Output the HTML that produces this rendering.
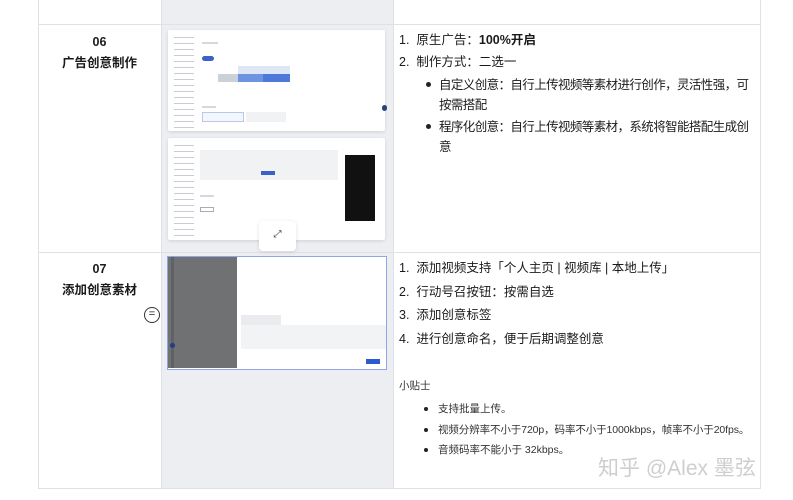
<!DOCTYPE html>
<html><head><meta charset="utf-8"><style>
*{margin:0;padding:0;box-sizing:border-box}
body{width:793px;height:500px;background:#fff;position:relative;overflow:hidden;font-family:"Liberation Sans","Noto Sans CJK SC",sans-serif;color:#1a1a1a}
.a{position:absolute}
.vl{position:absolute;width:1px;background:#dfe1e5}
.hl{position:absolute;height:1px;background:#dfe1e5}
.t{font-size:12.5px;line-height:20px;white-space:nowrap}
.sm{font-size:10.5px;line-height:18px;color:#333;white-space:nowrap}
.dot{position:absolute;width:5px;height:5px;border-radius:50%;background:#222}
.shot{position:absolute;background:#fff;border-radius:2px;box-shadow:0 1px 3px rgba(0,0,0,.12)}
.g{position:absolute;background:#d5d8de;height:2px}
</style></head><body>
<div class="a" style="left:161px;top:0;width:232px;height:488px;background:#eceef2"></div>
<div class="vl" style="left:38px;top:0;height:488px"></div>
<div class="vl" style="left:161px;top:0;height:488px"></div>
<div class="vl" style="left:393px;top:0;height:488px"></div>
<div class="vl" style="left:760px;top:0;height:488px"></div>
<div class="hl" style="left:38px;top:24px;width:723px"></div>
<div class="hl" style="left:38px;top:252px;width:723px"></div>
<div class="hl" style="left:38px;top:488px;width:723px"></div>

<div class="a" style="left:38px;width:123px;top:32px;text-align:center;font-weight:bold;font-size:12.5px;line-height:21px">06<br>广告创意制作</div>
<div class="a" style="left:38px;width:123px;top:259px;text-align:center;font-weight:bold;font-size:12.5px;line-height:21px">07<br>添加创意素材</div>
<div class="a" style="left:144px;top:307px;width:16px;height:16px;border:1.3px solid #333;border-radius:50%;font-size:11px;line-height:13px;text-align:center">=</div>

<div class="shot" style="left:168px;top:30px;width:217px;height:101px">
 <div class="a" style="left:6px;top:4px;width:20px;height:94px;background:repeating-linear-gradient(#fff 0,#fff 3px,#c9ccd2 3px,#c9ccd2 4px,#fff 4px,#fff 6px)"></div>
 <div class="g" style="left:34px;top:12px;width:16px"></div>
 <div class="a" style="left:34px;top:26px;width:12px;height:5px;border-radius:3px;background:#3a62c9"></div>
 <div class="a" style="left:70px;top:36px;width:52px;height:8px;background:#dfe6f6"></div>
 <div class="a" style="left:70px;top:44px;width:25px;height:8px;background:#6e93e0"></div>
 <div class="a" style="left:95px;top:44px;width:27px;height:8px;background:#4f79d9"></div>
 <div class="a" style="left:50px;top:44px;width:20px;height:8px;background:#ccd0d8"></div>
 <div class="g" style="left:34px;top:76px;width:14px"></div>
 <div class="a" style="left:34px;top:82px;width:42px;height:10px;border:1px solid #b9c7ea;background:#f2f6fd"></div>
 <div class="a" style="left:78px;top:82px;width:40px;height:10px;background:#f1f2f4"></div>
 <div class="a" style="left:214px;top:75px;width:5px;height:6px;background:#27437e;border-radius:3px"></div>
</div>
<div class="shot" style="left:168px;top:138px;width:217px;height:102px">
 <div class="a" style="left:6px;top:4px;width:20px;height:94px;background:repeating-linear-gradient(#fff 0,#fff 3px,#c9ccd2 3px,#c9ccd2 4px,#fff 4px,#fff 6px)"></div>
 <div class="a" style="left:32px;top:12px;width:138px;height:30px;background:#f1f2f4"></div>
 <div class="a" style="left:93px;top:33px;width:14px;height:4px;background:#3a62c9"></div>
 <div class="g" style="left:32px;top:57px;width:14px"></div>
 <div class="a" style="left:32px;top:69px;width:14px;height:5px;border:1px solid #aab"></div>
 <div class="a" style="left:177px;top:17px;width:30px;height:66px;background:#111"></div>
</div>
<div class="a" style="left:259px;top:221px;width:37px;height:30px;background:#fff;border-radius:4px;box-shadow:0 1px 4px rgba(0,0,0,.12);font-size:10px;text-align:center;line-height:28px;color:#333">⤢</div>
<div class="a" style="left:167px;top:256px;width:220px;height:114px;border:1.5px solid #8fa5e6;background:#fff">
 <div class="a" style="left:0;top:0;width:69px;height:111px;background:#6f7173"></div>
 <div class="a" style="left:3px;top:0;width:3px;height:111px;background:#5f6165"></div>
 <div class="a" style="left:2px;top:86px;width:5px;height:5px;border-radius:50%;background:#233e86"></div>
 <div class="g" style="left:73px;top:58px;width:40px;background:#e9ebee;height:10px"></div>
 <div class="a" style="left:73px;top:68px;width:145px;height:24px;background:#f2f3f5"></div>
 <div class="a" style="left:198px;top:102px;width:14px;height:5px;background:#2d5ad1"></div>
</div>

<div class="a t" style="left:399px;top:30px">1.&nbsp;&nbsp;原生广告：<b>100%开启</b></div>
<div class="a t" style="left:399px;top:52px">2.&nbsp;&nbsp;制作方式：二选一</div>
<div class="dot" style="left:426px;top:82px"></div>
<div class="a t" style="left:439px;top:75px;letter-spacing:-0.6px">自定义创意：自行上传视频等素材进行创作，灵活性强，可<br>按需搭配</div>
<div class="dot" style="left:426px;top:124px"></div>
<div class="a t" style="left:439px;top:117px;letter-spacing:-0.6px">程序化创意：自行上传视频等素材，系统将智能搭配生成创<br>意</div>

<div class="a t" style="left:399px;top:258px">1.&nbsp;&nbsp;添加视频支持「个人主页 | 视频库 | 本地上传」</div>
<div class="a t" style="left:399px;top:282px">2.&nbsp;&nbsp;行动号召按钮：按需自选</div>
<div class="a t" style="left:399px;top:305px">3.&nbsp;&nbsp;添加创意标签</div>
<div class="a t" style="left:399px;top:329px">4.&nbsp;&nbsp;进行创意命名，便于后期调整创意</div>

<div class="a sm" style="left:399px;top:377px">小贴士</div>
<div class="dot" style="left:424px;top:407px;width:4px;height:4px"></div>
<div class="a sm" style="left:438px;top:400px">支持批量上传。</div>
<div class="dot" style="left:424px;top:428px;width:4px;height:4px"></div>
<div class="a sm" style="left:438px;top:421px;letter-spacing:-0.1px">视频分辨率不小于720p，码率不小于1000kbps，帧率不小于20fps。</div>
<div class="dot" style="left:424px;top:448px;width:4px;height:4px"></div>
<div class="a sm" style="left:438px;top:441px">音频码率不能小于 32kbps。</div>
<div class="a" style="left:598px;top:452px;font-size:21px;color:rgba(185,185,190,.7);white-space:nowrap">知乎 @Alex 墨弦</div>
</body></html>
